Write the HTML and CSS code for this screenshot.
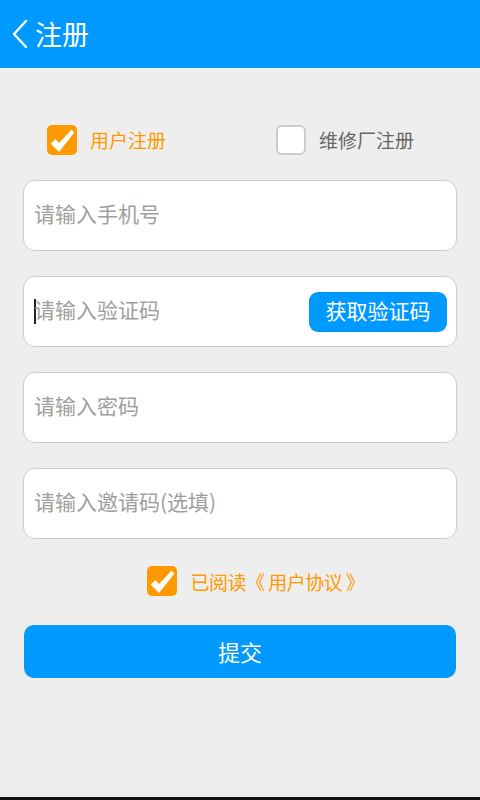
FILE: index.html
```html
<!DOCTYPE html>
<html lang="zh-CN">
<head>
    <meta charset="UTF-8">
    <meta name="viewport" content="width=device-width, initial-scale=1.0">
    <title>注册</title>
    <link rel="stylesheet" href="styles.css">
</head>
<body>

    <div class="header">
        <span class="back">
            <svg width="18" height="30" viewBox="0 0 18 30">
                <polyline points="15,2 3,15 15,28" fill="none" stroke="#fff" stroke-width="2.4" stroke-linecap="round" stroke-linejoin="round"/>
            </svg>
        </span>
        <span class="title">注册</span>
    </div>

    <div class="container">
        <!-- 注册类型 -->
        <div class="type-row">
            <label class="option checked">
                <span class="box">
                    <svg width="30" height="30" viewBox="0 0 30 30"><path d="M4 18.5 L8.5 14.5 L12 18.5 L24.5 5 L27 7.5 L12 26.5 Z" fill="#fff" stroke="#fff" stroke-width="0.8" stroke-linejoin="round"/></svg>
                </span>
                <span class="option-text">用户注册</span>
            </label>
            <label class="option">
                <span class="box"></span>
                <span class="option-text">维修厂注册</span>
            </label>
        </div>

        <div class="field">
            <input type="text" placeholder="请输入手机号">
        </div>
        <div class="field">
            <span class="caret"></span>
            <input type="text" placeholder="请输入验证码">
            <button class="code-btn">获取验证码</button>
        </div>
        <div class="field">
            <input type="password" placeholder="请输入密码">
        </div>
        <div class="field">
            <input type="text" placeholder="请输入邀请码(选填)">
        </div>

        <div class="agree">
            <span class="box">
                <svg width="30" height="30" viewBox="0 0 30 30"><path d="M4 18.5 L8.5 14.5 L12 18.5 L24.5 5 L27 7.5 L12 26.5 Z" fill="#fff" stroke="#fff" stroke-width="0.8" stroke-linejoin="round"/></svg>
            </span>
            <span class="agree-text">已阅读《 用户协议 》</span>
        </div>

        <button class="submit">提交</button>
    </div>

    <div class="bottom-bar"></div>

</body>
</html>
```

FILE: styles.css
```css
body {
    font-family: "Noto Sans CJK SC", "Noto Sans", sans-serif;
    background-color: #eeeeee;
    margin: 0;
    padding: 0;
    min-height: 100vh;
    display: flex;
    flex-direction: column;
}

.header {
    height: 69px;
    background-color: #0099ff;
    display: flex;
    align-items: center;
    padding-left: 11px;
    box-sizing: border-box;
    border-bottom: 1px solid #f6f6f6;
}

.back {
    display: flex;
    width: 24px;
}

.title {
    color: #fff;
    font-size: 27px;
    line-height: 1;
    padding-bottom: 2px;
}

.container {
    padding: 0 23px;
    display: flex;
    flex-direction: column;
}

.type-row {
    display: flex;
    justify-content: space-between;
    padding: 55px 43px 0 24px;
    height: 31px;
    margin-bottom: 25px;
}

.option {
    display: flex;
    align-items: center;
    gap: 13px;
}

.box {
    width: 30px;
    height: 30px;
    box-sizing: border-box;
    border-radius: 6px;
    border: 2px solid #cccccc;
    background-color: #fff;
    display: flex;
    align-items: center;
    justify-content: center;
}

.option.checked .box,
.agree .box {
    background-color: #ff9900;
    border: none;
    border-radius: 5px;
}

.option-text {
    font-size: 19px;
    color: #666;
}

.option.checked .option-text {
    color: #ff9900;
}

.field {
    height: 71px;
    box-sizing: border-box;
    background-color: #fff;
    border: 1px solid #cccccc;
    border-radius: 12px;
    margin-bottom: 25px;
    display: flex;
    align-items: center;
    padding: 0 9px 0 10px;
}

.field input {
    flex: 1;
    min-width: 0;
    border: none;
    outline: none;
    background: transparent;
    font-family: inherit;
    font-size: 21px;
    color: #333;
    padding: 0 0 6px 0;
}

.field input::placeholder {
    color: #9e9e9e;
}

.caret {
    width: 2px;
    height: 25px;
    background-color: #222;
    margin-right: -2px;
}

.code-btn {
    width: 138px;
    height: 40px;
    border: none;
    border-radius: 9px;
    background-color: #0099ff;
    color: #fff;
    font-family: inherit;
    font-size: 21px;
    padding: 0 0 3px 0;
}

.agree {
    display: flex;
    align-items: center;
    justify-content: center;
    gap: 13px;
    margin: 2px 0 28px 32px;
}

.agree-text {
    font-size: 19px;
    letter-spacing: -0.5px;
    color: #ff9900;
}

.submit {
    height: 55px;
    margin: 0;
    border: 1px solid #f7f0e0;
    border-radius: 11px;
    background-color: #0099ff;
    color: #fff;
    font-family: inherit;
    font-size: 22px;
    padding-bottom: 3px;
}

.bottom-bar {
    margin-top: auto;
    height: 3px;
    background-color: #111;
}
```
